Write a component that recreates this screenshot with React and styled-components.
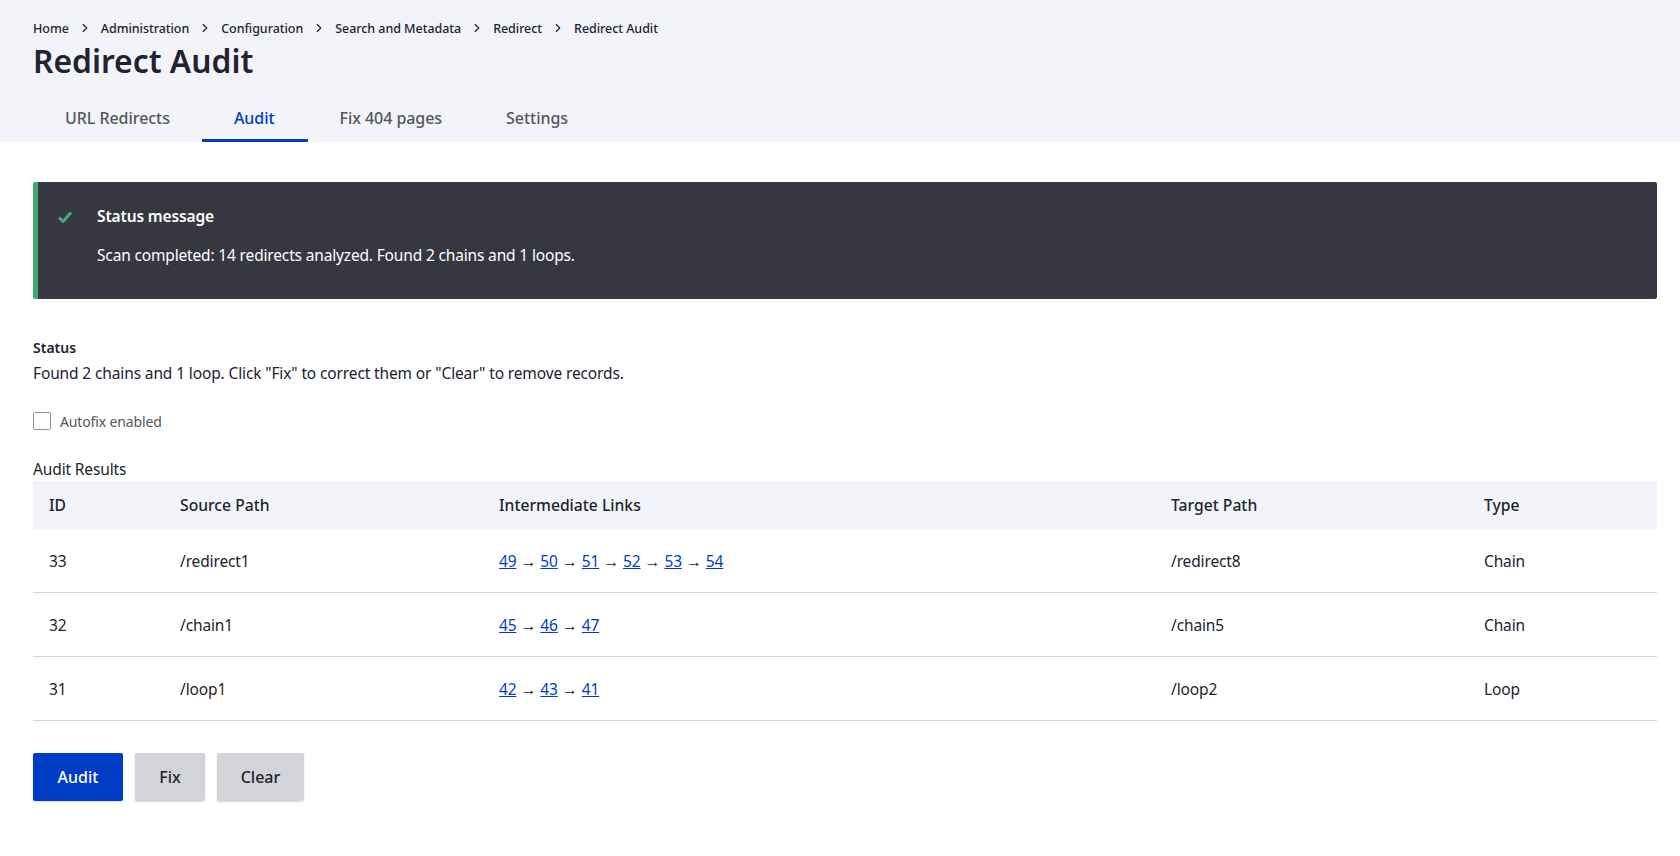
import React from "react";
import styled, { createGlobalStyle } from "styled-components";
import { ChevronRight } from "lucide-react";

const FONT = `"Noto Sans", "Liberation Sans", sans-serif`;

const Global = createGlobalStyle`
  html, body { margin: 0; padding: 0; background: #fff; }
  body { font-family: ${FONT}; font-size: 15.5px; letter-spacing: -0.13px; color: #222330; }
  * { box-sizing: border-box; }
`;

const Page = styled.div`
  display: flex;
  flex-direction: column;
  min-height: 856px;
`;

const Header = styled.header`
  height: 142px;
  background: #f3f4f9;
  padding: 19px 23px 0 33px;
  display: flex;
  flex-direction: column;
`;

const Breadcrumbs = styled.nav`
  display: flex;
  align-items: center;
  height: 18px;
  font-size: 12.5px;
  letter-spacing: -0.05px;
  font-weight: 500;
  color: #222330;
`;

const Crumb = styled.span`
  white-space: nowrap;
`;

const Sep = styled.span`
  display: flex;
  width: 32px;
  justify-content: center;
  color: #222330;
`;

const Title = styled.h1`
  margin: 3px 0 0;
  font-size: 31.8px;
  letter-spacing: 0;
  line-height: 42px;
  font-weight: 600;
  color: #222330;
`;

const Tabs = styled.div`
  display: flex;
  margin-top: auto;
`;

const Tab = styled.a`
  display: block;
  height: 50px;
  padding: 14px ${(p) => (p.$active ? "33px" : "32px")} 0 32px;
  font-size: 16px;
  letter-spacing: -0.05px;
  line-height: 24px;
  font-weight: 500;
  color: ${(p) => (p.$active ? "#003cc5" : "#55565b")};
  border-bottom: 3px solid ${(p) => (p.$active ? "#003cc5" : "transparent")};
`;

const Main = styled.main`
  padding: 40px 23px 0 33px;
`;

const Message = styled.div`
  display: flex;
  height: 117px;
  background: #373742;
  border-left: 5px solid #42a877;
  border-radius: 2px;
  padding: 22px 0 0 20px;
  color: #fff;
`;

const CheckIcon = styled.svg`
  width: 14px;
  height: 12px;
  margin-top: 7px;
  flex: none;
`;

const MessageBody = styled.div`
  margin-left: 25px;
`;

const MessageTitle = styled.div`
  line-height: 24px;
  font-weight: 600;
`;

const MessageText = styled.div`
  margin-top: 15px;
  letter-spacing: -0.16px;
  line-height: 24px;
`;

const StatusLabel = styled.div`
  margin-top: 40px;
  font-size: 14px;
  letter-spacing: 0;
  line-height: 18px;
  font-weight: 600;
`;

const StatusText = styled.div`
  margin-top: 4px;
  line-height: 24px;
`;

const CheckRow = styled.label`
  display: flex;
  align-items: center;
  margin-top: 27px;
  height: 18px;
`;

const Box = styled.span`
  display: block;
  width: 18px;
  height: 18px;
  background: #fff;
  border: 1px solid #8e929c;
  border-radius: 2px;
`;

const CheckLabel = styled.span`
  margin-left: 9px;
  font-size: 14px;
  color: #55565b;
`;

const Table = styled.table`
  width: 100%;
  margin-top: 28px;
  border-collapse: separate;
  border-spacing: 0;
  table-layout: fixed;
`;

const Caption = styled.caption`
  height: 23px;
  line-height: 22px;
  text-align: left;
`;

const Col = styled.col`
  width: ${(p) => p.$w}px;
`;

const HeadCell = styled.th`
  height: 48px;
  padding: 0 16px;
  background: #f3f4f9;
  text-align: left;
  font-weight: 500;
  font-size: 15.7px;
  letter-spacing: 0;
  color: #222330;
`;

const Cell = styled.td`
  height: 64px;
  padding: 0 16px;
  color: #222330;
  border-bottom: 1px solid #d3d4d9;
`;

const Link = styled.a`
  color: #003cc5;
  text-decoration: underline;
`;

const Arrow = styled.span`
  font-size: 16px;
  font-family: "Liberation Sans", sans-serif;
  margin: 0 4px;
`;

const Actions = styled.div`
  display: flex;
  gap: 12px;
  margin-top: 32px;
`;

const Button = styled.button`
  height: 48px;
  width: ${(p) => p.$w}px;
  padding: 0;
  border: 0;
  border-radius: 2px;
  font-family: ${FONT};
  font-size: 16px;
  font-weight: 500;
  color: ${(p) => (p.$primary ? "#fff" : "#222330")};
  background: ${(p) => (p.$primary ? "#003cc5" : "#d3d4d9")};
  box-shadow: 0 1px 2px rgba(0, 0, 0, 0.15);
`;

const crumbs = ["Home", "Administration", "Configuration", "Search and Metadata", "Redirect", "Redirect Audit"];
const tabs = ["URL Redirects", "Audit", "Fix 404 pages", "Settings"];
const widths = [131, 319, 672, 313, 189];
const heads = ["ID", "Source Path", "Intermediate Links", "Target Path", "Type"];
const rows = [
  { id: 33, src: "/redirect1", links: [49, 50, 51, 52, 53, 54], target: "/redirect8", type: "Chain" },
  { id: 32, src: "/chain1", links: [45, 46, 47], target: "/chain5", type: "Chain" },
  { id: 31, src: "/loop1", links: [42, 43, 41], target: "/loop2", type: "Loop" },
];

export default function App() {
  return (
    <Page>
      <Global />
      <Header>
        <Breadcrumbs>
          {crumbs.map((c, i) => (
            <React.Fragment key={c}>
              {i > 0 && (
                <Sep>
                  <ChevronRight size={14} strokeWidth={2} />
                </Sep>
              )}
              <Crumb>{c}</Crumb>
            </React.Fragment>
          ))}
        </Breadcrumbs>
        <Title>Redirect Audit</Title>
        <Tabs>
          {tabs.map((t) => (
            <Tab key={t} $active={t === "Audit"}>
              {t}
            </Tab>
          ))}
        </Tabs>
      </Header>
      <Main>
        <Message>
          <CheckIcon viewBox="0 0 14 12">
            <path d="M1 6.5 L5 10.5 L13 1.5" fill="none" stroke="#42a877" strokeWidth="3" />
          </CheckIcon>
          <MessageBody>
            <MessageTitle>Status message</MessageTitle>
            <MessageText>Scan completed: 14 redirects analyzed. Found 2 chains and 1 loops.</MessageText>
          </MessageBody>
        </Message>
        <StatusLabel>Status</StatusLabel>
        <StatusText>Found 2 chains and 1 loop. Click "Fix" to correct them or "Clear" to remove records.</StatusText>
        <CheckRow>
          <Box />
          <CheckLabel>Autofix enabled</CheckLabel>
        </CheckRow>
        <Table>
          <Caption>Audit Results</Caption>
          <colgroup>
            {widths.map((w, i) => (
              <Col key={i} $w={w} />
            ))}
          </colgroup>
          <thead>
            <tr>
              {heads.map((h) => (
                <HeadCell key={h}>{h}</HeadCell>
              ))}
            </tr>
          </thead>
          <tbody>
            {rows.map((r) => (
              <tr key={r.id}>
                <Cell>{r.id}</Cell>
                <Cell>{r.src}</Cell>
                <Cell>
                  {r.links.map((l, i) => (
                    <React.Fragment key={l}>
                      {i > 0 && <Arrow>→</Arrow>}
                      <Link>{l}</Link>
                    </React.Fragment>
                  ))}
                </Cell>
                <Cell>{r.target}</Cell>
                <Cell>{r.type}</Cell>
              </tr>
            ))}
          </tbody>
        </Table>
        <Actions>
          <Button $primary $w={90}>Audit</Button>
          <Button $w={70}>Fix</Button>
          <Button $w={87}>Clear</Button>
        </Actions>
      </Main>
    </Page>
  );
}
